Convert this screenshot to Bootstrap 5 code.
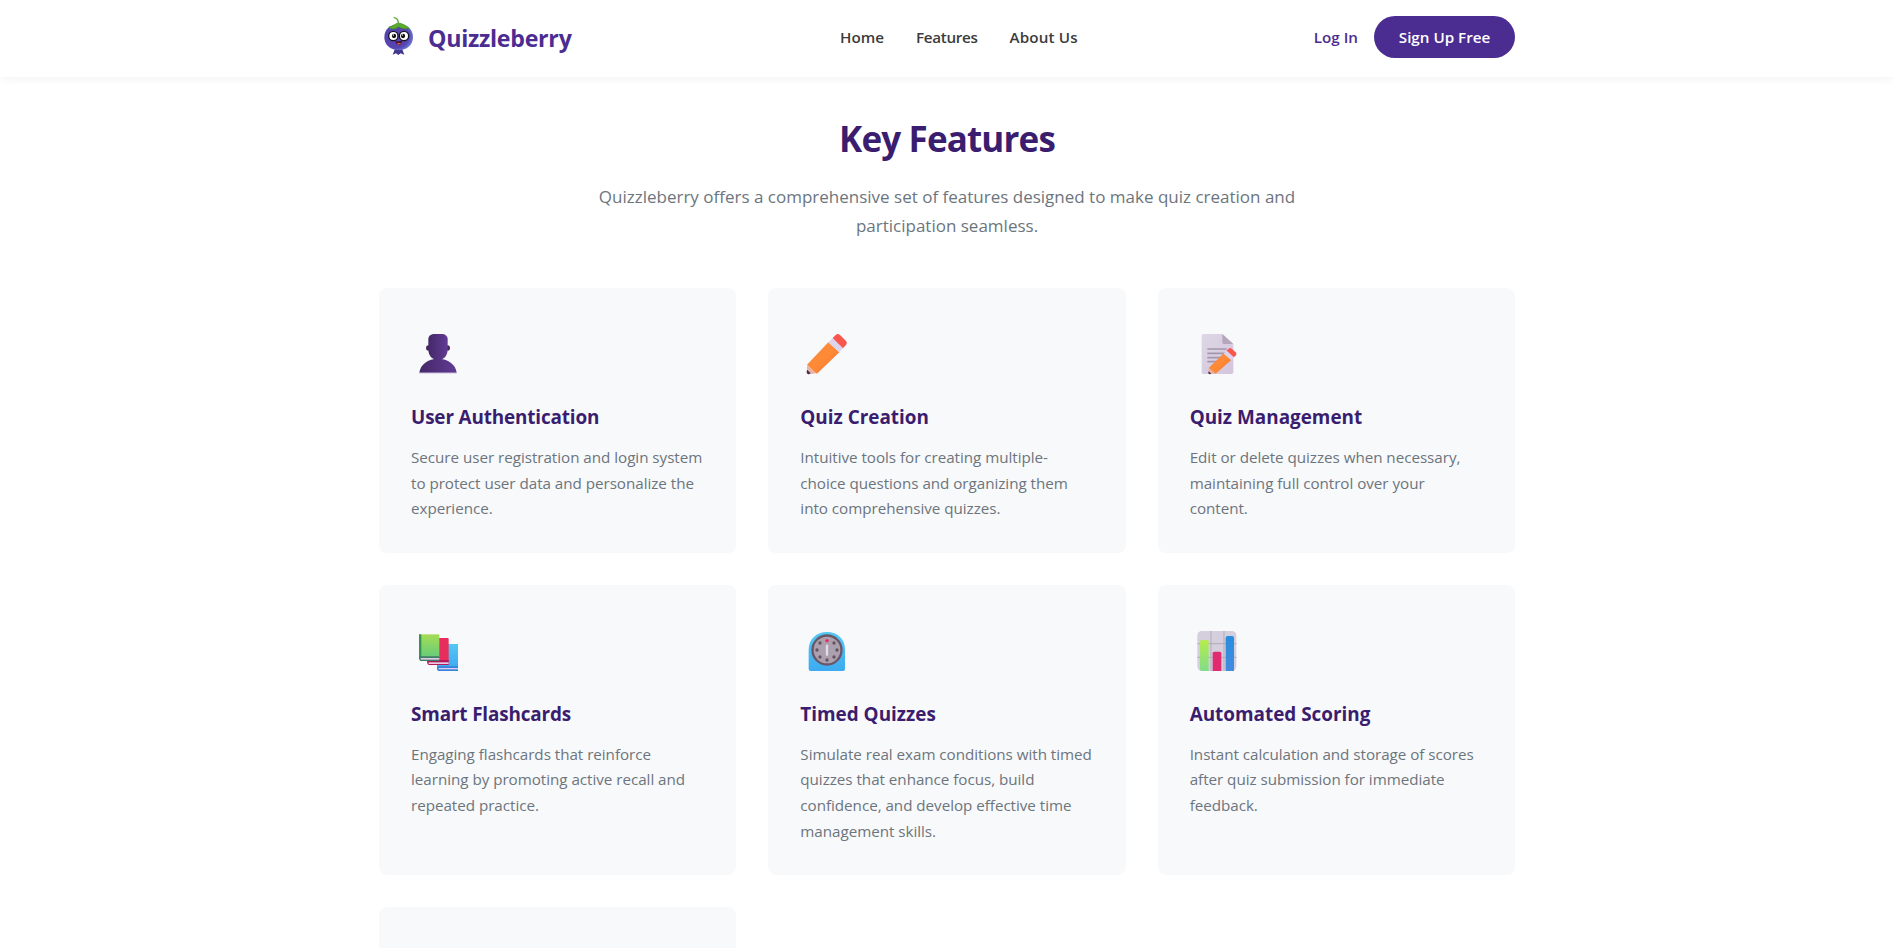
<!DOCTYPE html>
<html lang="en">
<head>
<meta charset="utf-8">
<meta name="viewport" content="width=device-width, initial-scale=1">
<title>Quizzleberry</title>
<link href="https://cdn.jsdelivr.net/npm/bootstrap@5.3.0/dist/css/bootstrap.min.css" rel="stylesheet">
<style>
body{font-family:"Open Sans","Noto Sans",sans-serif;overflow:hidden;height:948px;background:#fff}
.wrap{width:1136px;margin:0 auto;padding:0}
.page{width:1894px;height:948px;overflow:hidden}
.site-head{height:77px;background:#fff;box-shadow:0 2px 10px rgba(0,0,0,.05);width:1895px}
.site-head .wrap{display:grid;grid-template-columns:461px 1fr auto;height:74px;margin-left:379px}
.brand-name{font-size:23.2px;font-weight:700;color:#4b2c91;line-height:32px;margin-left:9px;margin-top:1px;letter-spacing:-.27px}
.top-link{font-size:15.2px;font-weight:600;color:#3b3b3b;text-decoration:none;white-space:nowrap}
.snug{letter-spacing:-.3px}
.airy{letter-spacing:.15px}
.main-nav{gap:32px}
.top-link.login{color:#4b2c91}
.signup{width:141px;height:42px;background:#4b2c91;color:#fff;font-size:15.2px;font-weight:600;padding:0;line-height:42px;border:0;white-space:nowrap}
.title-main{font-size:35px;font-weight:700;color:#3a1d6e;line-height:46px;margin:39px 0 0;letter-spacing:-.85px}
.intro{font-size:17px;line-height:28.8px;color:#6c757d;margin:21px 0 0;height:105px}
.feature-grid{display:grid;grid-template-columns:repeat(3,1fr);gap:32px}
.feature{background:#f8f9fb;border-radius:8px;padding:32px;height:264.8px;white-space:nowrap}
.feature.tall{height:290.4px}
.feature svg{display:block;width:56px;height:56px;margin-top:5px}
.feature h3{font-size:18.9px;font-weight:700;line-height:28px;color:#3a1d6e;margin:22px 0 0;height:42px}
.feature h3.snug{letter-spacing:-.15px}
.feature p{font-size:15.2px;line-height:25.6px;color:#6c757d;margin:0;letter-spacing:-.03px}
</style>
</head>
<body>
<div class="page">
<header class="site-head position-relative">
 <div class="wrap">
  <div class="d-flex align-items-center">
   <svg width="40" height="44" viewBox="0 0 120 132" aria-hidden="true">
    <defs><radialGradient id="berry" cx=".4" cy=".45" r=".65"><stop offset="0" stop-color="#5541a8"/><stop offset=".7" stop-color="#5544b2"/><stop offset="1" stop-color="#7388d8"/></radialGradient></defs>
    <path d="M49 98 41 119 51 115 58 120 65 115 76 119 68 98Z" fill="#43368f"/>
    <path d="M16 67C16 42 32 29 59 29s43 13 43 38c0 24-20 39-43 39S16 91 16 67Z" fill="url(#berry)"/>
    <path d="M29 37C39 35 45 28 57 24c13 1 24 8 34 16-12 3-23 1-32-5-9 7-20 10-30 2Z" fill="#5cac2b" stroke="#3f8b24" stroke-width="2"/>
    <path d="M58 28c1-11-1-18-14-21" fill="none" stroke="#5fa43b" stroke-width="4"/>
    <circle cx="43" cy="63" r="14" fill="#fff" stroke="#171521" stroke-width="4"/><circle cx="75" cy="63" r="14" fill="#fff" stroke="#171521" stroke-width="4"/>
    <circle cx="45" cy="63" r="6.500" fill="#111"/><circle cx="72" cy="63" r="6.500" fill="#111"/><circle cx="43" cy="60" r="2" fill="#fff"/><circle cx="70" cy="60" r="2" fill="#fff"/>
    <path d="M49 78q12 3 20-2 0 14-10 14-8 0-10-12Z" fill="#41132e"/><path d="M53 86q6-4 13-1-6 7-13 1Z" fill="#ff5d5d"/>
   </svg>
   <span class="brand-name">Quizzleberry</span>
  </div>
  <nav class="main-nav d-flex align-items-center">
   <a class="top-link" href="#">Home</a><a class="top-link snug" href="#">Features</a><a class="top-link airy" href="#">About Us</a>
  </nav>
  <div class="d-flex align-items-center"><a class="top-link login me-3" href="#">Log In</a><a class="btn signup rounded-pill" href="#">Sign Up Free</a></div>
 </div>
</header>
<main class="wrap">
 <h1 class="title-main text-center">Key Features</h1>
 <p class="intro text-center">Quizzleberry offers a comprehensive set of features designed to make quiz creation and<br>participation seamless.</p>
 <div class="feature-grid">
  <section class="feature">
   <svg viewBox="3 0 168 168"><defs><linearGradient id="pu"><stop stop-color="#442868"/><stop offset="1" stop-color="#623b94"/></linearGradient></defs>
    <path d="M28 143c3-25 26-42 56-42s53 17 56 42Z" fill="url(#pu)"/><path d="M28 144h112" stroke="#b7a2cd" stroke-width="2"/>
    <ellipse cx="54" cy="69" rx="6" ry="8" fill="#432366"/><ellipse cx="114" cy="69" rx="6" ry="8" fill="#432366"/>
    <path d="M55 43c0-11 8-16 20-16h19c12 0 19 6 19 16v29c0 21-12 33-29 33S55 93 55 72Z" fill="url(#pu)"/></svg>
   <h3 class="snug">User Authentication</h3>
   <p>Secure user registration and login system<br>to protect user data and personalize the<br>experience.</p>
  </section>
  <section class="feature">
   <svg viewBox="1 0 168 168"><defs><linearGradient id="pe" x1="0" y1="0" x2="1" y2="1"><stop stop-color="#f5854a"/><stop offset=".5" stop-color="#ff8b35"/><stop offset="1" stop-color="#e9733e"/></linearGradient></defs>
    <g id="pencil"><path d="M22 121 53 144 29 148q-8-1-7-8Z" fill="#e8b6a2"/><path d="M22 134 33 145 27 148q-7-1-6-8Z" fill="#4b2450"/>
    <path d="M22 119 86 52 119 82 52 146Z" fill="url(#pe)"/><path d="M86 52 100 39 131 69 119 82Z" fill="#ddd5ed"/>
    <path d="M99 39 108 30q6-6 13 0l18 18q5 6-1 13l-8 9Z" fill="#f9574e"/></g></svg>
   <h3>Quiz Creation</h3>
   <p>Intuitive tools for creating multiple-<br>choice questions and organizing them<br>into comprehensive quizzes.</p>
  </section>
  <section class="feature">
   <svg viewBox="-1 0 168 168"><defs><linearGradient id="sh" x2="1" y2="1"><stop stop-color="#ddd7e5"/><stop offset="1" stop-color="#d4c5dd"/></linearGradient></defs>
    <path d="M39 27H96L129 58V142q0 5-5 5H39q-5 0-5-5V32q0-5 5-5Z" fill="url(#sh)"/><path d="M96 27v25q0 5 5 5h28Z" fill="#b5a5bd"/>
    <path d="M51 72h58M51 85h58M51 98h58M51 110h40" stroke="#a398ab" stroke-width="5"/>
    <use href="#pencil" transform="translate(39.5 51.5) scale(.7 .65)"/></svg>
   <h3>Quiz Management</h3>
   <p>Edit or delete quizzes when necessary,<br>maintaining full control over your<br>content.</p>
  </section>
  <section class="feature tall">
   <svg viewBox="3 0 168 168"><defs><linearGradient id="gr" x2="0" y2="1"><stop stop-color="#a5dc54"/><stop offset="1" stop-color="#65cc7b"/></linearGradient><linearGradient id="bl" x2="0" y2="1"><stop stop-color="#55c8f3"/><stop offset="1" stop-color="#3eaaf1"/></linearGradient></defs>
    <path d="M81 66h63v70H81Z" fill="url(#bl)"/><path d="M81 133h63v14H84q-5-5-3-14Z" fill="#3a83d8"/><path d="M86 138h58v4H86Z" fill="#d8cff5"/>
    <path d="M52 48h61q3 0 3 3v68H52Z" fill="#e82c5b"/><path d="M52 114h64v15H56q-7-6-4-15Z" fill="#b5195b"/><path d="M56 121h60v5H56Z" fill="#e7cfe7"/>
    <path d="M27 37h61v69H27Z" fill="url(#gr)"/><path d="M27 37h7v68h-7Z" fill="#389251"/><path d="M27 103h61v14H31q-6-6-4-14Z" fill="#427b67"/><path d="M32 108h56v5H32Z" fill="#dacde5"/></svg>
   <h3 class="snug">Smart Flashcards</h3>
   <p>Engaging flashcards that reinforce<br>learning by promoting active recall and<br>repeated practice.</p>
  </section>
  <section class="feature tall">
   <svg viewBox="1 0 168 168"><path d="M27 84C27 51 50 30 82 30s54 21 54 54v57q0 6-6 6H33q-6 0-6-6Z" fill="url(#bl)"/>
    <circle cx="82" cy="84" r="47" fill="#695768"/><circle cx="82" cy="84" r="40" fill="#aca0ae"/>
    <g fill="#65535f"><circle cx="61" cy="63" r="5"/><circle cx="103" cy="63" r="5"/><circle cx="52" cy="84" r="5"/><circle cx="112" cy="84" r="5"/><circle cx="61" cy="105" r="5"/><circle cx="103" cy="105" r="5"/><circle cx="82" cy="114" r="5"/></g>
    <circle cx="82" cy="56" r="5" fill="#e52b64"/><path d="M82 71v27" stroke="#e2dce7" stroke-width="7" stroke-linecap="round"/></svg>
   <h3>Timed Quizzes</h3>
   <p>Simulate real exam conditions with timed<br>quizzes that enhance focus, build<br>confidence, and develop effective time<br>management skills.</p>
  </section>
  <section class="feature tall">
   <svg viewBox="-1 0 168 168"><defs><linearGradient id="b1" x2="0" y2="1"><stop stop-color="#b6ec4d"/><stop offset="1" stop-color="#80dc8a"/></linearGradient><linearGradient id="b2" x2="0" y2="1"><stop stop-color="#268de0"/><stop offset="1" stop-color="#438be0"/></linearGradient></defs>
    <rect x="21" y="27" width="117" height="120" rx="14" fill="#d5cedd"/><path d="M62 27v120M101 27v120M21 65h117M21 106h117" stroke="#b3abb9" stroke-width="3"/>
    <path d="M29 59q0-5 5-5h16q5 0 5 5v88H34q-5 0-5-5Z" fill="url(#b1)"/><path d="M67 94q0-5 5-5h16q5 0 5 5v53H67Z" fill="#df2b70"/><path d="M106 48q0-6 6-6h13q6 0 6 6v99h-25Z" fill="url(#b2)"/></svg>
   <h3>Automated Scoring</h3>
   <p>Instant calculation and storage of scores<br>after quiz submission for immediate<br>feedback.</p>
  </section>
  <section class="feature"></section>
 </div>
</main>
</div>
<script src="https://cdn.jsdelivr.net/npm/bootstrap@5.3.0/dist/js/bootstrap.bundle.min.js"></script>
</body>
</html>
